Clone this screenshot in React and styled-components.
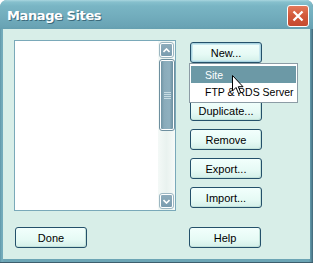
import React from "react";
import styled, { createGlobalStyle } from "styled-components";

const GlobalStyle = createGlobalStyle`
  html, body {
    margin: 0;
    padding: 0;
    background: #ffffff;
  }
  body {
    font-family: "Liberation Sans", Arial, sans-serif;
    font-size: 11px;
  }
`;

const Page = styled.div`
  width: 319px;
  height: 263px;
  overflow: hidden;
`;

const Window = styled.div`
  width: 313px;
  height: 263px;
  box-sizing: border-box;
  display: flex;
  flex-direction: column;
  border-radius: 7px 7px 0 0;
  background: linear-gradient(90deg, #5f97a9 0px, #76aebd 2px, #6ca5b5 4px, #6ca5b5 calc(100% - 4px), #5b8fa1 calc(100% - 2px), #3f6576 100%);
  border-bottom: 1px solid #3d5e6d;
`;

const TitleBar = styled.div`
  height: 29px;
  flex: none;
  display: flex;
  align-items: center;
  justify-content: space-between;
  padding: 0 4px 0 7px;
  border-radius: 7px 7px 0 0;
  background: linear-gradient(180deg, #a9d6df 0px, #86c0cd 2px, #79b5c4 6px, #72adbd 16px, #6aa4b5 26px, #659fb0 29px);
`;

const Title = styled.span`
  color: #ffffff;
  font-family: "DejaVu Sans", "Liberation Sans", sans-serif;
  font-weight: bold;
  font-size: 13px;
  letter-spacing: -0.4px;
  text-shadow: 1px 1px 0 #3b6a7b;
  padding-top: 1px;
`;

const CloseButton = styled.div`
  width: 20px;
  height: 20px;
  border: 1px solid #ffffff;
  border-radius: 3px;
  background: linear-gradient(180deg, #e3795a 0%, #d2583a 50%, #c44a2f 100%);
  display: flex;
  align-items: center;
  justify-content: center;
  margin-top: 2px;
`;

const Body = styled.div`
  flex: 1;
  margin: 0 3px 3px 3px;
  background: #d8eee8;
  position: relative;
  padding: 11px 0 0 11px;
  display: flex;
  flex-direction: column;
`;

const TopRow = styled.div`
  display: flex;
  gap: 14px;
  align-items: flex-start;
`;

const SiteList = styled.div`
  width: 162px;
  height: 171px;
  box-sizing: border-box;
  border: 1px solid #7aa9b9;
  background: #ffffff;
  display: flex;
  justify-content: flex-end;
`;

const Scrollbar = styled.div`
  width: 17px;
  display: flex;
  flex-direction: column;
  align-items: center;
  padding: 2px 0 2px;
  box-sizing: border-box;
  background: linear-gradient(90deg, #f4f9f7 0%, #e9f2ef 50%, #f6faf8 100%);
`;

const ScrollArrow = styled.div`
  width: 13px;
  height: 14px;
  box-sizing: border-box;
  border: 1px solid #ffffff;
  outline: 1px solid #9db7c2;
  border-radius: 2px;
  background: linear-gradient(180deg, #8eacbb 0%, #7a9caf 100%);
  display: flex;
  align-items: center;
  justify-content: center;
`;

const Thumb = styled.div`
  width: 14px;
  height: 70px;
  margin: 3px 0 0 1px;
  box-sizing: border-box;
  border: 1px solid #ffffff;
  outline: 1px solid #6e8f9f;
  border-radius: 2px;
  background: linear-gradient(90deg, #6f93a4 0%, #8aabba 25%, #8fb0bf 70%, #6b8fa0 100%);
  display: flex;
  flex-direction: column;
  align-items: center;
  justify-content: center;
  gap: 1px;
`;

const Grip = styled.div`
  width: 7px;
  height: 1px;
  background: #c7dce3;
`;

const TrackFill = styled.div`
  flex: 1;
`;

const ButtonColumn = styled.div`
  display: flex;
  flex-direction: column;
  gap: 8px;
  padding-top: 2px;
`;

const Button = styled.div`
  position: relative;
  width: 72px;
  height: 21px;
  box-sizing: border-box;
  border: 1px solid #24506a;
  border-radius: 3px;
  background: linear-gradient(180deg, #f2fffc 0%, #e6faf5 60%, #d3efe8 100%);
  box-shadow: ${(p) => (p.$hot ? "inset 0 0 0 1px #a8d3df, inset 0 0 0 2px #c9e8ef" : "inset -1px -1px 0 #c3e2da")};
  display: flex;
  align-items: center;
  justify-content: center;
  color: #000000;
  font-size: 11px;
`;

const BottomRow = styled.div`
  display: flex;
  gap: 102px;
  margin-top: 16px;
  padding-left: 1px;
`;

const Menu = styled.div`
  position: absolute;
  top: 20px;
  left: -2px;
  width: 109px;
  box-sizing: border-box;
  border: 1px solid #8c9ca5;
  background: #ffffff;
  padding: 2px 1px;
  z-index: 5;
`;

const MenuItem = styled.div`
  height: 17px;
  display: flex;
  align-items: center;
  padding-left: 14px;
  color: ${(p) => (p.$active ? "#ffffff" : "#000000")};
  background: ${(p) => (p.$active ? "#6c99a6" : "transparent")};
  font-size: 10.5px;
  white-space: nowrap;
`;

const Cursor = styled.svg`
  position: absolute;
  left: 42px;
  top: 11px;
  z-index: 6;
`;

export default function App() {
  return (
    <Page>
      <GlobalStyle />
      <Window>
        <TitleBar>
          <Title>Manage Sites</Title>
          <CloseButton>
            <svg width="12" height="12" viewBox="0 0 12 12">
              <path d="M1.5 1.5 L10.5 10.5 M10.5 1.5 L1.5 10.5" stroke="#ffffff" strokeWidth="2.3" />
            </svg>
          </CloseButton>
        </TitleBar>
        <Body>
          <TopRow>
            <SiteList>
              <Scrollbar>
                <ScrollArrow>
                  <svg width="7" height="5" viewBox="0 0 7 5">
                    <path d="M0.5 4 L3.5 1 L6.5 4" stroke="#ffffff" strokeWidth="1.6" fill="none" />
                  </svg>
                </ScrollArrow>
                <Thumb>
                  <Grip />
                  <Grip />
                  <Grip />
                  <Grip />
                </Thumb>
                <TrackFill />
                <ScrollArrow>
                  <svg width="7" height="5" viewBox="0 0 7 5">
                    <path d="M0.5 1 L3.5 4 L6.5 1" stroke="#ffffff" strokeWidth="1.6" fill="none" />
                  </svg>
                </ScrollArrow>
              </Scrollbar>
            </SiteList>
            <ButtonColumn>
              <Button $hot>
                New...
                <Menu>
                  <MenuItem $active>Site</MenuItem>
                  <MenuItem>FTP &amp; RDS Server</MenuItem>
                  <Cursor width="12" height="20" viewBox="0 0 12 20">
                    <path
                      d="M0.5 0.5 L0.5 16 L4 12.5 L6.6 18.6 L8.8 17.7 L6.3 11.7 L11 11.7 Z"
                      fill="#ffffff"
                      stroke="#000000"
                      strokeWidth="1"
                    />
                  </Cursor>
                </Menu>
              </Button>
              <Button>Edit...</Button>
              <Button>Duplicate...</Button>
              <Button>Remove</Button>
              <Button>Export...</Button>
              <Button>Import...</Button>
            </ButtonColumn>
          </TopRow>
          <BottomRow>
            <Button>Done</Button>
            <Button>Help</Button>
          </BottomRow>
        </Body>
      </Window>
    </Page>
  );
}
